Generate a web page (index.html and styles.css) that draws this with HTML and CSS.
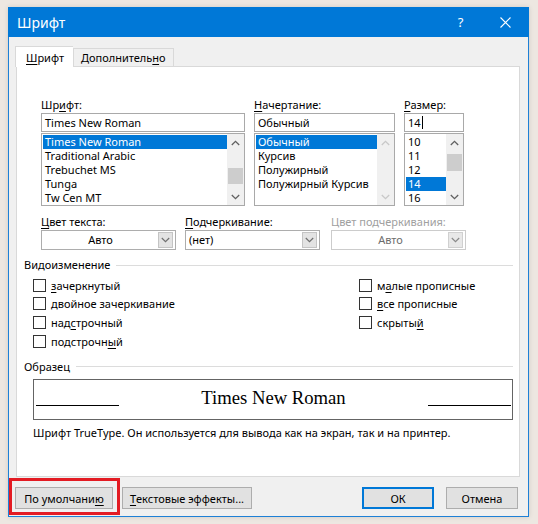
FILE: index.html
```html
<!DOCTYPE html>
<html lang="ru">
<head>
<meta charset="utf-8">
<title>Шрифт</title>
<link rel="stylesheet" href="styles.css">
</head>
<body>
<div class="window">
  <div class="titlebar">
    <span class="title">Шрифт</span>
    <span class="tb-btn help">?</span>
    <span class="tb-btn close"><svg width="11" height="11" viewBox="0 0 11 11"><path d="M0.5 0.5 L10.5 10.5 M10.5 0.5 L0.5 10.5" stroke="#fff" stroke-width="1.1" fill="none"/></svg></span>
  </div>
  <div class="content">
    <div class="tabs">
      <div class="tab active"><u>Ш</u>рифт</div>
      <div class="tab">Дополнитель<u>н</u>о</div>
    </div>
    <div class="panel">
      <div class="font-row">
        <div class="col col-font">
          <div class="label">Шр<u>и</u>фт:</div>
          <div class="input">Times New Roman</div>
          <div class="list">
            <div class="items">
              <div class="item sel">Times New Roman</div>
              <div class="item">Traditional Arabic</div>
              <div class="item">Trebuchet MS</div>
              <div class="item">Tunga</div>
              <div class="item">Tw Cen MT</div>
            </div>
            <div class="sbar">
              <span class="arr"><svg width="9" height="6" viewBox="0 0 9 6"><path d="M0.8 5 L4.5 1.3 L8.2 5" stroke="#606060" stroke-width="1.3" fill="none"/></svg></span>
              <span class="track"><span class="thumb thumb-font"></span></span>
              <span class="arr"><svg width="9" height="6" viewBox="0 0 9 6"><path d="M0.8 1 L4.5 4.7 L8.2 1" stroke="#606060" stroke-width="1.3" fill="none"/></svg></span>
            </div>
          </div>
        </div>
        <div class="col col-style">
          <div class="label"><u>Н</u>ачертание:</div>
          <div class="input">Обычный</div>
          <div class="list">
            <div class="items">
              <div class="item sel">Обычный</div>
              <div class="item">Курсив</div>
              <div class="item">Полужирный</div>
              <div class="item">Полужирный Курсив</div>
            </div>
            <div class="sbar">
              <span class="arr"><svg width="9" height="6" viewBox="0 0 9 6"><path d="M0.8 5 L4.5 1.3 L8.2 5" stroke="#c8c8c8" stroke-width="1.3" fill="none"/></svg></span>
              <span class="track"></span>
              <span class="arr"><svg width="9" height="6" viewBox="0 0 9 6"><path d="M0.8 1 L4.5 4.7 L8.2 1" stroke="#c8c8c8" stroke-width="1.3" fill="none"/></svg></span>
            </div>
          </div>
        </div>
        <div class="col col-size">
          <div class="label"><u>Р</u>азмер:</div>
          <div class="input">14<span class="caret"></span></div>
          <div class="list">
            <div class="items">
              <div class="item">10</div>
              <div class="item">11</div>
              <div class="item">12</div>
              <div class="item sel">14</div>
              <div class="item">16</div>
            </div>
            <div class="sbar">
              <span class="arr"><svg width="9" height="6" viewBox="0 0 9 6"><path d="M0.8 5 L4.5 1.3 L8.2 5" stroke="#606060" stroke-width="1.3" fill="none"/></svg></span>
              <span class="track"><span class="thumb thumb-size"></span></span>
              <span class="arr"><svg width="9" height="6" viewBox="0 0 9 6"><path d="M0.8 1 L4.5 4.7 L8.2 1" stroke="#606060" stroke-width="1.3" fill="none"/></svg></span>
            </div>
          </div>
        </div>
      </div>

      <div class="color-row">
        <div class="dcol">
          <div class="label"><u>Ц</u>вет текста:</div>
          <div class="combo"><span class="cval center">Авто</span><span class="cbtn"><svg width="9" height="6" viewBox="0 0 9 6"><path d="M0.8 1 L4.5 4.7 L8.2 1" stroke="#707070" stroke-width="1.2" fill="none"/></svg></span></div>
        </div>
        <div class="dcol">
          <div class="label"><u>П</u>одчеркивание:</div>
          <div class="combo"><span class="cval">(нет)</span><span class="cbtn"><svg width="9" height="6" viewBox="0 0 9 6"><path d="M0.8 1 L4.5 4.7 L8.2 1" stroke="#707070" stroke-width="1.2" fill="none"/></svg></span></div>
        </div>
        <div class="dcol dcol-dis">
          <div class="label dis">Цвет подчеркивания:</div>
          <div class="combo combo-dis"><span class="cval center">Авто</span><span class="cbtn"><svg width="9" height="6" viewBox="0 0 9 6"><path d="M0.8 1 L4.5 4.7 L8.2 1" stroke="#8a8a8a" stroke-width="1.2" fill="none"/></svg></span></div>
        </div>
      </div>

      <div class="group-head"><span>Видоизменение</span><i class="rule"></i></div>
      <div class="checks">
        <div class="ccol">
          <div class="chk"><span class="box"></span><span><u>з</u>ачеркнутый</span></div>
          <div class="chk"><span class="box"></span><span>двойное зачеркивание</span></div>
          <div class="chk"><span class="box"></span><span>над<u>с</u>трочный</span></div>
          <div class="chk"><span class="box"></span><span>подстрочн<u>ы</u>й</span></div>
        </div>
        <div class="ccol ccol-right">
          <div class="chk"><span class="box"></span><span>м<u>а</u>лые прописные</span></div>
          <div class="chk"><span class="box"></span><span><u>в</u>се прописные</span></div>
          <div class="chk"><span class="box"></span><span>скрыты<u>й</u></span></div>
        </div>
      </div>

      <div class="group-head sample-head"><span>Образец</span><i class="rule"></i></div>
      <div class="sample-box">
        <span class="sline"></span>
        <span class="sample-text">Times New Roman</span>
        <span class="sline"></span>
      </div>
      <div class="desc">Шрифт TrueType. Он используется для вывода как на экран, так и на принтер.</div>
    </div>

    <div class="buttons">
      <div class="btn btn-default">По умолчани<u>ю</u></div>
      <div class="btn btn-effects"><u>Т</u>екстовые эффекты...</div>
      <div class="spacer"></div>
      <div class="btn btn-ok">ОК</div>
      <div class="btn btn-cancel">Отмена</div>
    </div>
  </div>
</div>
<div class="highlight"></div>
</body>
</html>
```

FILE: styles.css
```css
* { box-sizing: border-box; }
html, body { margin: 0; padding: 0; }
body {
  width: 538px;
  height: 524px;
  overflow: hidden;
  background: #ede7e1;
  font-family: "Noto Sans", "DejaVu Sans", sans-serif;
  font-size: 11px;
  color: #000;
  position: relative;
}
u { text-decoration: underline; text-underline-offset: 2px; text-decoration-thickness: 1px; }

.window {
  margin: 7px 0 0 8px;
  width: 521px;
  height: 510px;
  background: #f0f0f0;
  border: 1px solid #1e80d6;
  border-top: none;
  display: flex;
  flex-direction: column;
  box-shadow: 0 0 5px rgba(0,0,0,0.12);
}
.titlebar {
  height: 30px;
  margin: 0 -1px;
  background: #0078d7;
  color: #fff;
  display: flex;
  align-items: center;
}
.title { flex: 1; font-size: 14px; padding-left: 9px; }
.tb-btn { width: 45px; height: 30px; display: flex; align-items: center; justify-content: center; }
.help { font-size: 13px; }
.close { margin-right: 1px; }

.content { padding: 9px 8px 0 6px; display: flex; flex-direction: column; }

.tabs { display: flex; align-items: flex-end; height: 20px; position: relative; z-index: 1; }
.tab {
  height: 18px;
  padding: 0 7px;
  border: 1px solid #d9d9d9;
  border-bottom: none;
  background: #f0f0f0;
  display: flex;
  align-items: center;
  width: 101px;
}
.tab.active {
  height: 21px;
  margin-bottom: -1px;
  background: #fff;
  width: 58px;
  padding-left: 10px;
  border-right: none;
}

.panel {
  margin-left: 1px;
  width: 504px;
  height: 411px;
  background: #fff;
  border: 1px solid #d9d9d9;
  padding: 30px 6px 0 0;
  display: flex;
  flex-direction: column;
}

.label { height: 16px; line-height: 15px; white-space: nowrap; }
.label.dis { color: #a0a0a0; }

.font-row { display: flex; gap: 9px; padding-left: 24px; }
.col-font { width: 204px; }
.col-style { width: 141px; }
.col-size { width: 60px; }

.input {
  height: 19px;
  border: 1px solid #a9a9a9;
  padding-left: 3px;
  line-height: 16px;
  white-space: nowrap;
  display: flex;
  align-items: center;
}
.caret { display: inline-block; width: 1px; height: 13px; background: #000; margin-left: 1px; }

.list {
  margin-top: 1px;
  height: 73px;
  border: 1px solid #a9a9a9;
  display: flex;
  padding: 1px 0 1px 1px;
}
.items { flex: 1; min-width: 0; }
.item { height: 14px; line-height: 14px; padding-left: 2px; white-space: nowrap; overflow: hidden; }
.item.sel { background: #0078d7; color: #fff; }

.sbar {
  width: 17px;
  background: #f0f0f0;
  display: flex;
  flex-direction: column;
  margin: -1px 0 -1px 0;
}
.arr { height: 17px; display: flex; align-items: center; justify-content: center; }
.track { flex: 1; position: relative; }
.thumb { position: absolute; left: 1px; right: 1px; background: #cdcdcd; }
.thumb-font { top: 17px; height: 16px; }
.thumb-size { top: 3px; height: 17px; }

.color-row { display: flex; padding-left: 24px; margin-top: 8px; }
.dcol { width: 135px; margin-right: 9px; }
.dcol-dis { margin-left: 2px; }
.combo {
  height: 20px;
  border: 1px solid #adadad;
  background: #fff;
  display: flex;
  padding: 1px;
}
.cval { flex: 1; line-height: 16px; padding-left: 2px; }
.cval.center { text-align: center; padding-left: 0; }
.cbtn {
  width: 15px;
  background: #e3e3e3;
  border: 1px solid #c4c4c4;
  display: flex;
  align-items: center;
  justify-content: center;
  margin-right: 1px;
}
.combo-dis { border-color: #cccccc; }
.combo-dis .cval { color: #6d6d6d; }
.combo-dis .cbtn { background: #e8e8e8; border-color: #d0d0d0; }

.group-head {
  margin-top: 7px;
  padding-left: 7px;
  height: 15px;
  line-height: 15px;
  display: flex;
  align-items: center;
  white-space: nowrap;
}
.group-head .rule { flex: 1; height: 1px; background: #dcdcdc; margin-left: 6px; margin-top: 1px; }

.checks { display: flex; margin-top: 4px; padding-left: 16px; }
.ccol { width: 326px; }
.ccol-right { width: auto; }
.chk { height: 18.67px; display: flex; align-items: center; white-space: nowrap; }
.box { width: 13px; height: 13px; border: 1px solid #333; background: #fff; margin-right: 5px; flex: none; }

.sample-head { margin-top: 8px; }
.sample-box {
  margin: 5px 0 0 16px;
  height: 41px;
  border: 1px solid #646464;
  display: flex;
  justify-content: space-between;
  align-items: flex-start;
  padding: 0 1px 0 2px;
}
.sline { width: 83px; height: 1px; background: #000; margin-top: 25px; }
.sample-text {
  font-family: "Liberation Serif", "Times New Roman", serif;
  font-size: 18.67px;
  line-height: 22px;
  margin-top: 7px;
  white-space: nowrap;
}
.desc { margin: 5px 0 0 16px; height: 15px; line-height: 15px; white-space: nowrap; }

.buttons { display: flex; margin-top: 10px; height: 22px; }
.btn {
  height: 22px;
  background: #e1e1e1;
  border: 1px solid #adadad;
  display: flex;
  align-items: center;
  justify-content: center;
  white-space: nowrap;
}
.btn-default { width: 98px; }
.btn-effects { width: 130px; margin-left: 9px; }
.spacer { flex: 1; }
.btn-ok { width: 72px; border: 2px solid #0078d7; }
.btn-cancel { width: 72px; margin-left: 12px; margin-right: 2px; }

.highlight {
  position: absolute;
  left: 9px;
  top: 478px;
  width: 111px;
  height: 37px;
  border: 3px solid #e31b23;
}
```
